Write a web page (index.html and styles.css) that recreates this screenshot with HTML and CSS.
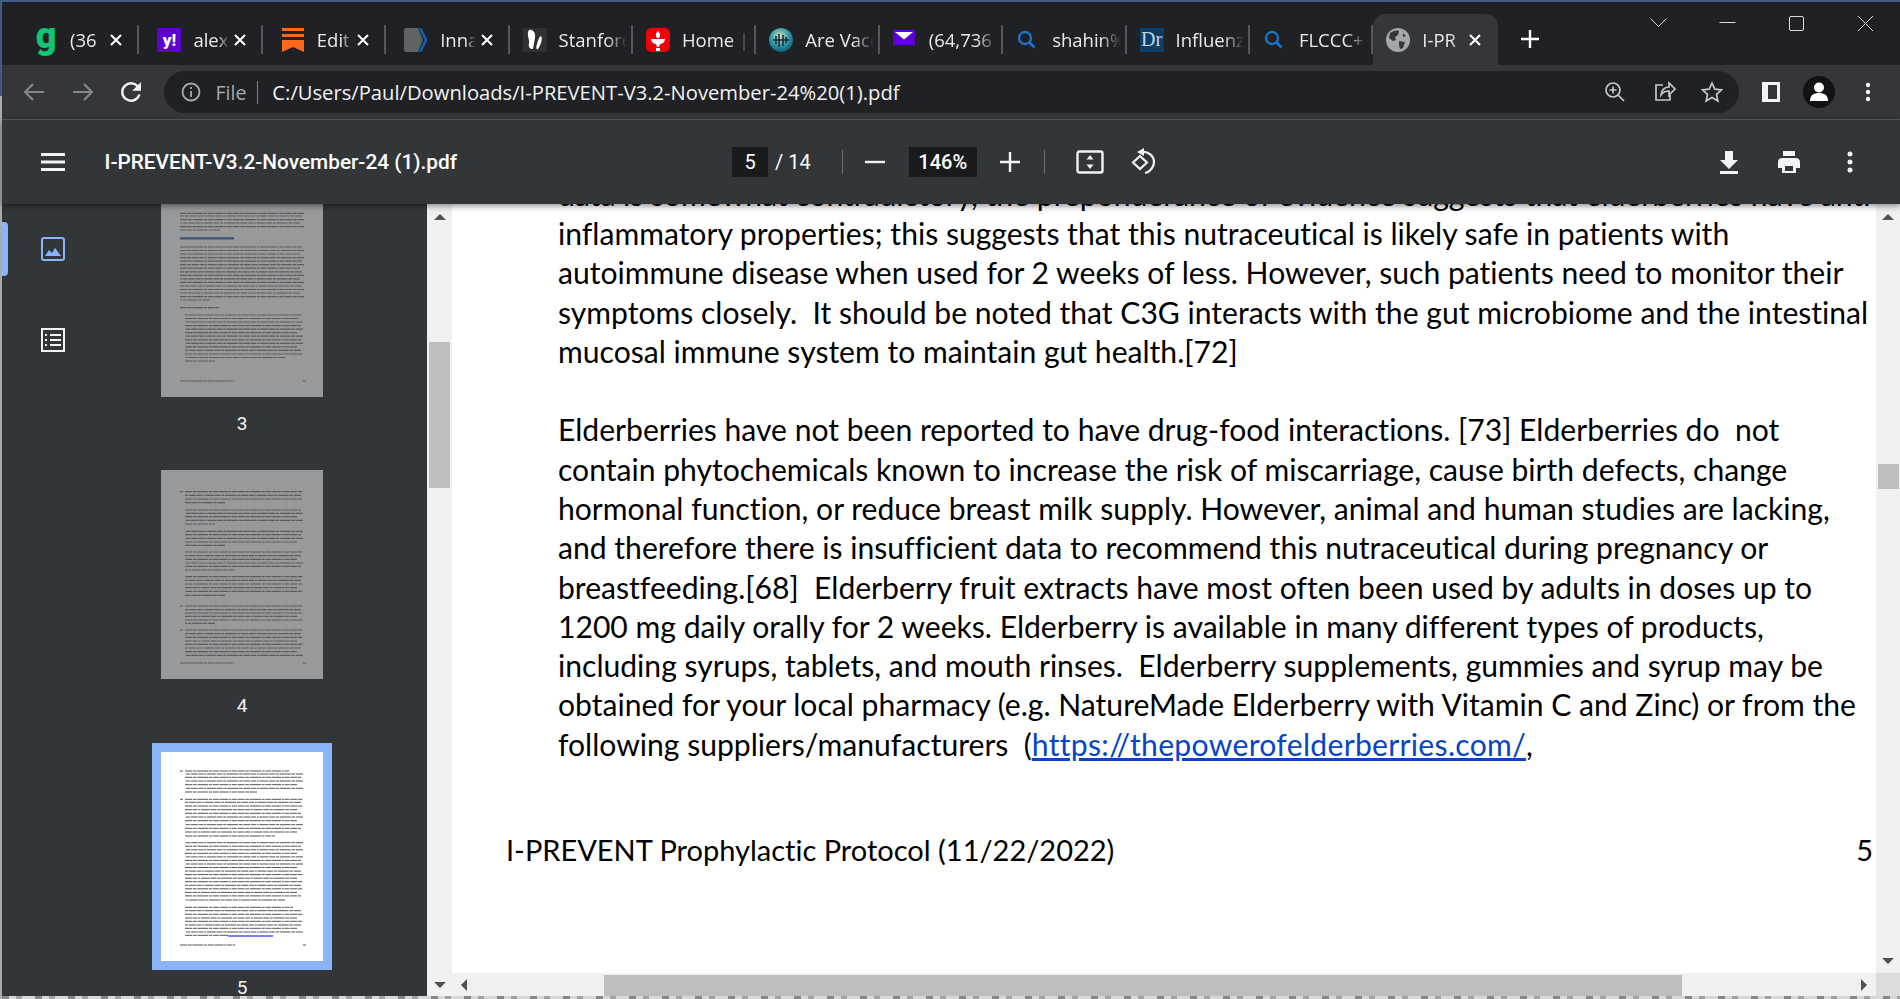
FILE: index.html
```html
<!DOCTYPE html>
<html lang="en">
  <head>
    <meta charset="UTF-8" />
    <meta name="viewport" content="width=device-width, initial-scale=1.0" />
    <title>I-PREVENT-V3.2-November-24 (1).pdf</title>
    <link rel="stylesheet" href="styles.css">
  </head>
  <body>
    <div class="window">
      <!-- tab strip -->
      <div class="tabstrip">
        <div class="tab">
          <span class="favicon fav-g">g</span>
          <span class="tab-title">(36</span>
          <svg class="tab-close" viewBox="0 0 12 12"><path d="M1 1l10 10M11 1L1 11" /></svg>
        </div>
        <div class="tab">
          <span class="favicon fav-yahoo">y!</span>
          <span class="tab-title">alex</span>
          <svg class="tab-close" viewBox="0 0 12 12"><path d="M1 1l10 10M11 1L1 11" /></svg>
        </div>
        <div class="tab">
          <svg class="favicon" viewBox="0 0 24 24"><path fill="#ff6719" d="M1 0h22v3H1zM1 6h22v3H1zM1 12h22v12l-11-5-11 5z" /></svg>
          <span class="tab-title">Edit</span>
          <svg class="tab-close" viewBox="0 0 12 12"><path d="M1 1l10 10M11 1L1 11" /></svg>
        </div>
        <div class="tab">
          <svg class="favicon" viewBox="0 0 24 24"><path fill="#5f6368" d="M2 0h12l5 12-5 12H2a2 2 0 0 1-2-2V2a2 2 0 0 1 2-2z" /><path fill="none" stroke="#0b63b6" stroke-width="2.6" d="M16 0l6 12-6 12" /></svg>
          <span class="tab-title">Inna</span>
          <svg class="tab-close" viewBox="0 0 12 12"><path d="M1 1l10 10M11 1L1 11" /></svg>
        </div>
        <div class="tab tab-plain">
          <svg class="favicon" viewBox="0 0 24 24"><rect width="24" height="24" fill="#2e3033" /><path fill="#fff" d="M6 2c4-1 7 3 6 8l-2 11c-3 0-5-2-4-6 1-3-3-9 0-13zM18 8c2 2 0 9-3 13-2 1-2-2-1-5 1-4 2-7 4-8z" /></svg>
          <span class="tab-title">Stanford</span>
        </div>
        <div class="tab tab-plain">
          <svg class="favicon" viewBox="0 0 24 24"><rect width="24" height="24" rx="5" fill="#f00008" /><path fill="#fff" d="M12 3c2 2 3 4 1 7h-2c-2-3-1-5 1-7zM5 11h14c0 3-3 5-5 5l-1 3h-2l-1-3c-2 0-5-2-5-5zM10 20h4v3h-4z" /></svg>
          <span class="tab-title">Home |</span>
        </div>
        <div class="tab tab-plain">
          <svg class="favicon" viewBox="0 0 24 24"><defs><radialGradient id="earth" cx=".45" cy=".35" r=".7"><stop offset="0" stop-color="#d6e6b8" /><stop offset=".55" stop-color="#2f97a8" /><stop offset="1" stop-color="#12506b" /></radialGradient></defs><circle cx="12" cy="12" r="12" fill="url(#earth)" /><path fill="none" stroke="#17303c" stroke-width="1.6" d="M4 12h16M7 8v8M10 6v13M14 7v11M17 9v6" /></svg>
          <span class="tab-title">Are Vacc</span>
        </div>
        <div class="tab tab-plain">
          <svg class="favicon" viewBox="0 0 24 24"><rect y="2" width="22" height="15" fill="#5f01d1" /><path fill="#fff" d="M2 4h18l-9 7.500z" /></svg>
          <span class="tab-title">(64,736</span>
        </div>
        <div class="tab tab-plain">
          <svg class="favicon" viewBox="0 0 24 24"><circle cx="9" cy="10" r="6" fill="none" stroke="#1a73c8" stroke-width="2.400" /><path stroke="#1a73c8" stroke-width="2.800" d="M13.500 14.500l5 5" /></svg>
          <span class="tab-title">shahin%</span>
        </div>
        <div class="tab tab-plain">
          <span class="favicon fav-dr">Dr</span>
          <span class="tab-title">Influenz</span>
        </div>
        <div class="tab tab-plain">
          <svg class="favicon" viewBox="0 0 24 24"><circle cx="9" cy="10" r="6" fill="none" stroke="#1a73c8" stroke-width="2.400" /><path stroke="#1a73c8" stroke-width="2.800" d="M13.500 14.500l5 5" /></svg>
          <span class="tab-title">FLCCC+</span>
        </div>
        <div class="tab tab-active">
          <svg class="favicon" viewBox="0 0 24 24"><circle cx="12" cy="12" r="12" fill="#a4a7ab" /><path fill="#35363a" d="M4 5c3-2 7-3 9-2l-1 4-3 2 1 3-3 1-4-3zM13 13l6 1-2 6-3 1-1-4zM17 5l3 3-3 1z" /></svg>
          <span class="tab-title">I-PR</span>
          <svg class="tab-close" viewBox="0 0 12 12"><path d="M1 1l10 10M11 1L1 11" /></svg>
        </div>
        <svg class="new-tab" viewBox="0 0 18 18"><path d="M9 0v18M0 9h18" /></svg>
        <div class="window-controls">
          <svg class="win-btn" viewBox="0 0 69 45"><path d="M26.500 16.500l8 8 8-8" /></svg>
          <svg class="win-btn" viewBox="0 0 69 45"><path d="M26.500 20.500h16" /></svg>
          <svg class="win-btn" viewBox="0 0 69 45"><rect x="27.500" y="14.500" width="14" height="14" rx="1.500" /></svg>
          <svg class="win-btn" viewBox="0 0 69 45"><path d="M27 14l15 15M42 14L27 29" /></svg>
        </div>
      </div>

      <!-- address bar -->
      <div class="toolbar">
        <div class="nav-btn">
          <svg class="icon-24 icon-dim" viewBox="0 0 24 24"><path d="M22 12H3M11 4l-8 8 8 8" /></svg>
        </div>
        <div class="nav-btn">
          <svg class="icon-24 icon-dim" viewBox="0 0 24 24"><path d="M2 12h19M13 4l8 8-8 8" /></svg>
        </div>
        <div class="nav-btn">
          <svg class="icon-reload icon-fill" viewBox="0 0 24 24"><path d="M17.650 6.350A7.960 7.960 0 0 0 12 4a8 8 0 1 0 7.730 10h-2.080A6 6 0 1 1 12 6c1.660 0 3.140.690 4.220 1.780L13 11h7V4l-2.350 2.350z" /></svg>
        </div>
        <div class="omnibox">
          <svg class="info-icon" viewBox="0 0 20 20"><circle cx="10" cy="10" r="8.500" /><path d="M10 9v6M10 5v2" /></svg>
          <span class="scheme">File</span>
          <span class="omni-sep"></span>
          <span class="url">C:/Users/Paul/Downloads/I-PREVENT-V3.2-November-24%20(1).pdf</span>
          <div class="omni-actions">
            <div class="nav-btn">
              <svg class="icon-24 icon-line" viewBox="0 0 24 24"><circle cx="10" cy="10" r="7" /><path d="M15 15l6 6M10 6.500v7M6.500 10h7" /></svg>
            </div>
            <div class="nav-btn">
              <svg class="icon-24 icon-line" viewBox="0 0 24 24"><path d="M11 5H4v15h14v-5M9 15c0-5 4-8 8-8V3l6 6-6 6v-4c-3 0-6 1-8 4z" /></svg>
            </div>
            <div class="nav-btn">
              <svg class="icon-24 icon-line" viewBox="0 0 24 24"><path d="M12 3l2.800 6.200 6.700.7-5 4.500 1.400 6.600-5.900-3.400-5.900 3.400 1.400-6.600-5-4.500 6.700-.7z" /></svg>
            </div>
          </div>
        </div>
        <div class="nav-btn side-btn">
          <svg class="icon-24" viewBox="0 0 24 24"><path fill="#f1f3f4" fill-rule="evenodd" d="M3 2h18v20H3zM9 5v14h9V5z" /></svg>
        </div>
        <div class="nav-btn">
          <svg class="avatar" viewBox="0 0 32 32"><circle cx="16" cy="16" r="16" fill="#111214" /><circle cx="16" cy="11.500" r="5" fill="#fff" /><path fill="#fff" d="M7 25c0-6 4-8 9-8s9 2 9 8z" /></svg>
        </div>
        <div class="nav-btn">
          <svg class="icon-24 icon-fill" viewBox="0 0 24 24"><circle cx="12" cy="5" r="2.200" /><circle cx="12" cy="12" r="2.200" /><circle cx="12" cy="19" r="2.200" /></svg>
        </div>
      </div>

      <!-- pdf viewer toolbar -->
      <div class="pdfbar">
        <div class="pdf-left">
          <div class="nav-btn">
            <svg class="icon-24 icon-fill" viewBox="0 0 24 24"><path d="M0 3h24v3H0zM0 10.500h24v3H0zM0 18h24v3H0z" /></svg>
          </div>
          <span class="pdf-title">I-PREVENT-V3.2-November-24 (1).pdf</span>
        </div>
        <span class="num-box page-box">5</span>
        <span class="page-total">/ 14</span>
        <span class="pdf-sep sep-a"></span>
        <svg class="pdf-icon minus-icon" viewBox="0 0 20 20"><path d="M0 10h20" /></svg>
        <span class="num-box zoom-box">146%</span>
        <svg class="pdf-icon plus-icon" viewBox="0 0 20 20"><path d="M0 10h20M10 0v20" /></svg>
        <span class="pdf-sep sep-b"></span>
        <svg class="fit-icon" viewBox="0 0 28 24"><rect x="1.500" y="1.500" width="25" height="21" rx="2" /><path class="solid" d="M14 5l3.500 4.500h-7zM14 19l-3.500-4.500h7z" /></svg>
        <svg class="rotate-icon" viewBox="0 0 28 28"><path d="M11 8l7 6.500-7 6.500-7-6.500zM13 4c6-1 12 4 12 10 0 5-4 10-9 11" /><path class="solid" d="M8 4l7-4v8z" /></svg>
        <div class="pdf-right">
          <div class="pdf-btn">
            <svg class="icon-24 icon-fill" viewBox="0 0 24 24"><path d="M8 1h8v9h5L12 19 3 10h5zM3 21h18v3H3z" /></svg>
          </div>
          <div class="pdf-btn">
            <svg class="icon-24 icon-fill" viewBox="0 0 24 24"><path d="M5 8h14c2 0 4 1.500 4 4v6h-4v5H5v-5H1v-6c0-2.500 2-4 4-4zM8 16v5h8v-5zM6 1h12v5H6z" /></svg>
          </div>
          <div class="pdf-btn">
            <svg class="icon-24 icon-fill" viewBox="0 0 24 24"><circle cx="12" cy="4" r="2.500" /><circle cx="12" cy="12" r="2.500" /><circle cx="12" cy="20" r="2.500" /></svg>
          </div>
        </div>
      </div>

      <div class="viewer">
        <!-- thumbnails panel -->
        <aside class="sidebar">
          <div class="rail">
            <span class="rail-marker"></span>
            <svg class="rail-icon rail-icon-on" viewBox="0 0 24 24"><rect x="1" y="1" width="22" height="22" rx="2" /><path class="solid" d="M4 19l4-6 3 3 3-5 6 8z" /></svg>
            <svg class="rail-icon" viewBox="0 0 24 24"><rect x="1" y="1" width="22" height="22" /><path d="M9 7h11M9 12h11M9 17h11M4 7h2M4 12h2M4 17h2" /></svg>
          </div>
          <div class="thumbs">
            <div class="thumb-item">
              <svg class="thumb thumb-dim" viewBox="0 0 162 209">
                <path class="thumb-head" d="M19 50.300h54" />
                <path class="thumb-lines" d="M19 25.300h124M141 28h-122M19 31.700h124M139 35h-120M19 38.700h124M59 42h-40M19 59h122M143 62.500h-124M19 66h120M143 69.600h-124M19 73.100h122M143 76.700h-124M19 80.200h120M141 83.800h-122M19 87.300h124M139 90.900h-120M19 94.400h124M141 98h-122M19 101.500h124M139 105h-120M19 108.600h124M49 112h-30M19 119.700h39M140 127h-116M24 130.500h114M142 134h-118M24 137.600h116M142 141.100h-118M24 144.700h112M142 148.200h-118M24 151.800h116M142 155.300h-118M24 158.900h112M140 162.400h-116M24 166h118M124 169.500h-100M24 173h30M19 193h54M142 193h3" />
              </svg>
              <span class="thumb-label">3</span>
            </div>
            <div class="thumb-item">
              <svg class="thumb thumb-dim" viewBox="0 0 162 209">
                <path class="thumb-lines" d="M19 21.700h3M24 21.700h118M140 25.300h-116M24 29h118M64 32.700h-40M24 40h116M142 43.300h-118M24 46.700h112M142 50.300h-118M24 54h30M142 61.300h-118M24 64.700h116M142 68.300h-118M24 72h112M64 75.300h-40M24 82h118M140 85.700h-116M24 89.300h112M142 93h-118M24 96.300h116M74 100h-50M24 106.700h118M140 110.300h-116M24 114h118M136 117.700h-112M24 121.300h118M64 125.300h-40M19 136h3M24 136h118M140 139.700h-116M24 143h118M136 146.300h-112M24 150h118M54 153.300h-30M19 160h3M24 160h118M140 163.700h-116M24 167.300h118M136 171h-112M24 174.300h118M140 178h-116M24 181.700h112M142 185.300h-118M19 193h54M142 193h3" />
              </svg>
              <span class="thumb-label">4</span>
            </div>
            <div class="thumb-item">
              <svg class="thumb thumb-on" viewBox="0 0 162 209">
                <path class="thumb-lines" d="M19 19h3M24 19h104M142 22h-118M24 25.300h116M142 29h-118M24 32.700h112M142 36.300h-118M24 40h72M19 47.300h3M24 47.300h118M140 50.300h-116M24 54h118M136 57.700h-112M24 61.300h116M142 65h-118M24 68.700h112M142 72.700h-118M24 76.300h116M136 80h-112M24 84h90M142 90.700h-118M24 94.200h116M142 97.800h-118M24 101.300h112M142 104.900h-118M24 108.400h116M142 112h-118M24 115.500h112M140 119.100h-116M24 122.600h118M136 126.200h-112M24 129.700h118M140 133.300h-116M24 136.800h118M136 140.400h-112M24 143.900h116M124 148h-100M24 155.300h108M140 158.700h-116M24 162.300h118M136 166h-112M24 169.300h118M140 173h-116M24 176.300h112M142 180h-118M24 183.300h43M19 193h55M142 193h3" />
                <path class="thumb-link" d="M67 184h45" />
              </svg>
              <span class="thumb-label">5</span>
            </div>
          </div>
        </aside>

        <!-- left scrollbar of the page -->
        <div class="vbar">
          <span class="arrow arrow-up"></span>
          <span class="vthumb vthumb-left"></span>
          <span class="arrow arrow-down arrow-down-left"></span>
        </div>

        <div class="page-column">
          <main class="page">
            <div class="page-text">
              <p class="para">
                <span class="line">data is somewhat contradictory, the preponderance of evidence suggests that elderberries have anti-</span>
                <span class="line">inflammatory properties; this suggests that this nutraceutical is likely safe in patients with</span>
                <span class="line">autoimmune disease when used for 2 weeks of less. However, such patients need to monitor their</span>
                <span class="line">symptoms closely.  It should be noted that C3G interacts with the gut microbiome and the intestinal</span>
                <span class="line">mucosal immune system to maintain gut health.[72]</span>
              </p>
              <p class="para">
                <span class="line">Elderberries have not been reported to have drug-food interactions. [73] Elderberries do  not</span>
                <span class="line">contain phytochemicals known to increase the risk of miscarriage, cause birth defects, change</span>
                <span class="line">hormonal function, or reduce breast milk supply. However, animal and human studies are lacking,</span>
                <span class="line">and therefore there is insufficient data to recommend this nutraceutical during pregnancy or</span>
                <span class="line">breastfeeding.[68]  Elderberry fruit extracts have most often been used by adults in doses up to</span>
                <span class="line">1200 mg daily orally for 2 weeks. Elderberry is available in many different types of products,</span>
                <span class="line">including syrups, tablets, and mouth rinses.  Elderberry supplements, gummies and syrup may be</span>
                <span class="line">obtained for your local pharmacy (e.g. NatureMade Elderberry with Vitamin C and Zinc) or from the</span>
                <span class="line">following suppliers/manufacturers  (<a class="page-link" href="#">https://thepowerofelderberries.com/</a>,</span>
              </p>
            </div>
            <div class="page-footer">
              <span>I-PREVENT Prophylactic Protocol (11/22/2022)</span>
              <span>5</span>
            </div>
          </main>
          <div class="hbar">
            <span class="arrow arrow-left"></span>
            <span class="hthumb"></span>
            <span class="arrow arrow-right"></span>
          </div>
        </div>

        <!-- right scrollbar -->
        <div class="vbar vbar-right">
          <span class="arrow arrow-up"></span>
          <span class="vthumb vthumb-right"></span>
          <span class="arrow arrow-down arrow-down-right"></span>
          <span class="corner"></span>
        </div>
      </div>

      <div class="desktop-strip"></div>
    </div>
  </body>
</html>
```

FILE: styles.css
```css
* {
  box-sizing: border-box;
}
html,
body {
  margin: 0;
  height: 100%;
  overflow: hidden;
}
body {
  background: linear-gradient(to bottom, #3f5b86 96px, #a9abad 96px);
  font-family: "Roboto", sans-serif;
  color: #fff;
}
.window {
  height: 999px;
  padding: 2px 0 0 2px;
  display: flex;
  flex-direction: column;
}

/* tabs */
.tabstrip {
  flex: 0 0 63px;
  background-color: #202124;
  display: flex;
  align-items: flex-end;
  padding-left: 14px;
  font-family: "Open Sans", sans-serif;
}
.tab {
  flex: 0 0 123.4px;
  min-width: 0;
  height: 51px;
  padding: 0 6px 0 18px;
  display: flex;
  align-items: center;
  position: relative;
}
.tab::after {
  content: "";
  position: absolute;
  right: 0;
  top: 11px;
  height: 29px;
  width: 2px;
  background-color: #55575b;
}
.tab-plain {
  padding-left: 13px;
}
.tab-active {
  flex-basis: 125px;
  padding-left: 13px;
  background-color: #35363a;
  border-radius: 12px 12px 0 0;
}
.tab-active::after {
  display: none;
}
.favicon {
  flex: 0 0 24px;
  width: 24px;
  height: 24px;
  margin-right: 12px;
  font-family: "Roboto", sans-serif;
  display: flex;
  align-items: center;
  justify-content: center;
}
.fav-g {
  color: #10c574;
  font-size: 36px;
  font-weight: 900;
  line-height: 24px;
  padding-bottom: 8px;
}
.fav-yahoo {
  background-color: #5f01d1;
  font-size: 17px;
  font-weight: 900;
}
.fav-dr {
  background-color: #0b3d66;
  color: #c6d4e2;
  font-family: "Liberation Serif", serif;
  font-size: 20px;
}
.tab-title {
  flex: 1;
  min-width: 0;
  overflow: hidden;
  white-space: nowrap;
  font-size: 18.5px;
  color: #e8eaed;
  -webkit-mask-image: linear-gradient(to right, #000 70%, transparent 100%);
  mask-image: linear-gradient(to right, #000 70%, transparent 100%);
}
.tab-close {
  flex: 0 0 12px;
  width: 12px;
  height: 12px;
  margin: 0 11px 0 5px;
  fill: none;
  stroke: #fff;
  stroke-width: 2;
}
.new-tab {
  width: 18px;
  height: 18px;
  margin: 0 0 17px 23px;
  fill: none;
  stroke: #fff;
  stroke-width: 2.4;
}
.window-controls {
  display: flex;
  margin-left: auto;
  align-self: flex-start;
}
.win-btn {
  width: 69px;
  height: 45px;
  fill: none;
  stroke: #d8dadc;
  stroke-width: 1;
}

/* address bar */
.toolbar {
  flex: 0 0 55px;
  background-color: #35363a;
  border-bottom: 1px solid #5a5c60;
  display: flex;
  align-items: center;
  padding-left: 8px;
}
.nav-btn {
  flex: 0 0 48.5px;
  height: 42px;
  display: flex;
  align-items: center;
  justify-content: center;
}
.icon-24 {
  width: 24px;
  height: 24px;
}
.icon-reload {
  width: 30px;
  height: 30px;
}
.icon-dim {
  fill: none;
  stroke: #84878b;
  stroke-width: 2.2;
}
.icon-fill {
  fill: #f1f3f4;
}
.icon-line {
  fill: none;
  stroke: #c4c7ca;
  stroke-width: 1.7;
}
.omnibox {
  flex: 0 0 1575px;
  height: 42px;
  margin-left: 8px;
  background-color: #202124;
  border-radius: 21px;
  display: flex;
  align-items: center;
  padding-left: 17px;
}
.info-icon {
  width: 20px;
  height: 20px;
  fill: none;
  stroke: #a6a9ad;
  stroke-width: 1.8;
}
.scheme {
  margin-left: 15px;
  font-family: "Open Sans", sans-serif;
  font-size: 19.5px;
  color: #a6a9ad;
}
.omni-sep {
  width: 1px;
  height: 23px;
  margin: 0 14px 0 11px;
  background-color: #808386;
}
.url {
  font-family: "Open Sans", sans-serif;
  font-size: 20.2px;
  color: #f1f3f4;
  white-space: nowrap;
}
.omni-actions {
  display: flex;
  margin-left: auto;
  margin-right: 2px;
}
.side-btn {
  margin-left: 8px;
}
.avatar {
  width: 32px;
  height: 32px;
}

/* pdf toolbar */
.pdfbar {
  flex: 0 0 84px;
  background-color: #323639;
  display: flex;
  align-items: center;
  position: relative;
  z-index: 2;
  box-shadow: 0 2px 6px rgba(0, 0, 0, 0.45);
}
.pdf-left {
  flex: 0 0 730px;
  display: flex;
  align-items: center;
  padding-left: 27px;
}
.pdf-title {
  margin-left: 27px;
  font-size: 20.8px;
  font-weight: 500;
  white-space: nowrap;
}
.num-box {
  height: 30px;
  background-color: #191b1c;
  display: flex;
  align-items: center;
  justify-content: center;
  font-size: 20px;
}
.page-box {
  width: 36px;
}
.page-total {
  margin-left: 7px;
  font-size: 20px;
}
.pdf-sep {
  width: 1px;
  height: 24px;
  background-color: #6e7174;
}
.sep-a {
  margin-left: 31px;
}
.sep-b {
  margin-left: 24px;
}
.pdf-icon {
  width: 20px;
  height: 20px;
  fill: none;
  stroke: #f1f3f4;
  stroke-width: 2.4;
}
.minus-icon {
  margin-left: 22px;
}
.zoom-box {
  width: 68px;
  margin-left: 24px;
  font-weight: 500;
}
.plus-icon {
  margin: 0 0 0 23px;
}
.fit-icon {
  width: 28px;
  height: 24px;
  margin-left: 31px;
  fill: none;
  stroke: #f1f3f4;
  stroke-width: 2.4;
}
.rotate-icon {
  width: 28px;
  height: 28px;
  margin-left: 25px;
  fill: none;
  stroke: #f1f3f4;
  stroke-width: 2.2;
}
.solid {
  fill: #f1f3f4;
  stroke: none;
}
.pdf-right {
  display: flex;
  margin-left: auto;
  margin-right: 20px;
}
.pdf-btn {
  flex: 0 0 60.5px;
  display: flex;
  align-items: center;
  justify-content: center;
}

/* main area */
.viewer {
  flex: 0 0 792px;
  display: flex;
  min-height: 0;
}
.sidebar {
  flex: 0 0 425px;
  background-color: #323639;
  display: flex;
  overflow: hidden;
}
.rail {
  flex: 0 0 102px;
  position: relative;
  display: flex;
  flex-direction: column;
  align-items: center;
  padding-top: 33px;
  gap: 67px;
}
.rail-marker {
  position: absolute;
  left: 0;
  top: 18px;
  width: 6px;
  height: 54px;
  background-color: #8ab4f8;
  border-radius: 0 4px 4px 0;
}
.rail-icon {
  width: 24px;
  height: 24px;
  fill: none;
  stroke: #f1f3f4;
  stroke-width: 2;
}
.rail-icon-on {
  stroke: #8ab4f8;
}
.rail-icon-on .solid {
  fill: #8ab4f8;
}
.thumbs {
  flex: 0 0 162px;
  margin: -16px 0 0 57px;
}
.thumb-item {
  display: flex;
  flex-direction: column;
  align-items: center;
}
.thumb {
  display: block;
  width: 162px;
  height: 209px;
}
.thumb-dim {
  background-color: #98999b;
}
.thumb-on {
  background-color: #fff;
  outline: 9px solid #8ab4f8;
}
.thumb-lines {
  fill: none;
  stroke: #5c5d5f;
  stroke-width: 1.2;
  stroke-dasharray: 7 0.7 4 0.7 11 0.7 3 0.7 6 0.7 9 0.7 2 0.7 5 0.7;
  filter: blur(0.35px);
}
.thumb-on .thumb-lines {
  stroke: #555;
  stroke-width: 1;
}
.thumb-head {
  fill: none;
  stroke: #3d5578;
  stroke-width: 2.2;
  filter: blur(0.35px);
}
.thumb-link {
  fill: none;
  stroke: #0000f0;
  stroke-width: 1.2;
}
.thumb-label {
  height: 73px;
  padding-top: 15px;
  font-size: 19px;
  line-height: 24px;
  color: #f1f3f4;
}

/* scrollbars */
.vbar {
  flex: 0 0 25px;
  background-color: #f0f0f0;
  display: flex;
  flex-direction: column;
  align-items: center;
  padding-top: 10px;
}
.vbar-right {
  flex-basis: 24px;
}
.arrow {
  display: block;
  width: 0;
  height: 0;
  flex: none;
}
.arrow-up {
  border-left: 6px solid transparent;
  border-right: 6px solid transparent;
  border-bottom: 6px solid #505050;
}
.arrow-down {
  border-left: 6px solid transparent;
  border-right: 6px solid transparent;
  border-top: 6px solid #505050;
}
.arrow-left {
  border-top: 6px solid transparent;
  border-bottom: 6px solid transparent;
  border-right: 6px solid #505050;
}
.arrow-right {
  border-top: 6px solid transparent;
  border-bottom: 6px solid transparent;
  border-left: 6px solid #505050;
}
.vthumb {
  width: 21px;
  background-color: #bebebe;
}
.vthumb-left {
  height: 146px;
  margin-top: 122px;
}
.vthumb-right {
  height: 25px;
  margin-top: 244px;
}
.arrow-down-left {
  margin-top: auto;
  margin-bottom: 8px;
}
.arrow-down-right {
  margin-top: auto;
  margin-bottom: 9px;
}
.corner {
  flex: 0 0 23px;
  align-self: stretch;
  background-color: #dcdcdc;
}
.page-column {
  flex: 1;
  min-width: 0;
  display: flex;
  flex-direction: column;
}
.hbar {
  flex: 0 0 23px;
  background-color: #f0f0f0;
  display: flex;
  align-items: flex-end;
  padding-left: 9px;
}
.hbar .arrow {
  margin-bottom: 5px;
}
.hthumb {
  width: 1078px;
  height: 21px;
  margin-left: 137px;
  background-color: #bebebe;
}
.hbar .arrow-right {
  margin-left: 179px;
}

/* pdf page */
.page {
  flex: 1;
  min-height: 0;
  background-color: #fff;
  overflow: hidden;
  color: #000;
  font-family: "Lato", "Liberation Sans", sans-serif;
  font-size: 30.1px;
  line-height: 39.28px;
  font-variant-ligatures: none;
}
.page-text {
  margin-top: -29.3px;
  padding-left: 106px;
}
.para {
  margin: 0 0 39.28px;
}
.line {
  display: block;
  white-space: pre;
}
.page-link {
  color: #0645c8;
  letter-spacing: 0.31px;
}
.page-footer {
  display: flex;
  justify-content: space-between;
  margin-top: 66px;
  padding: 0 3px 0 54px;
  font-size: 29px;
  white-space: pre;
}
.desktop-strip {
  flex: 0 0 3px;
  background-color: #d6d7d8;
  background-image: repeating-linear-gradient(to right, #85878a 0 7px, transparent 7px 14px, #a0a2a4 14px 20px, transparent 20px 33px);
}
```
